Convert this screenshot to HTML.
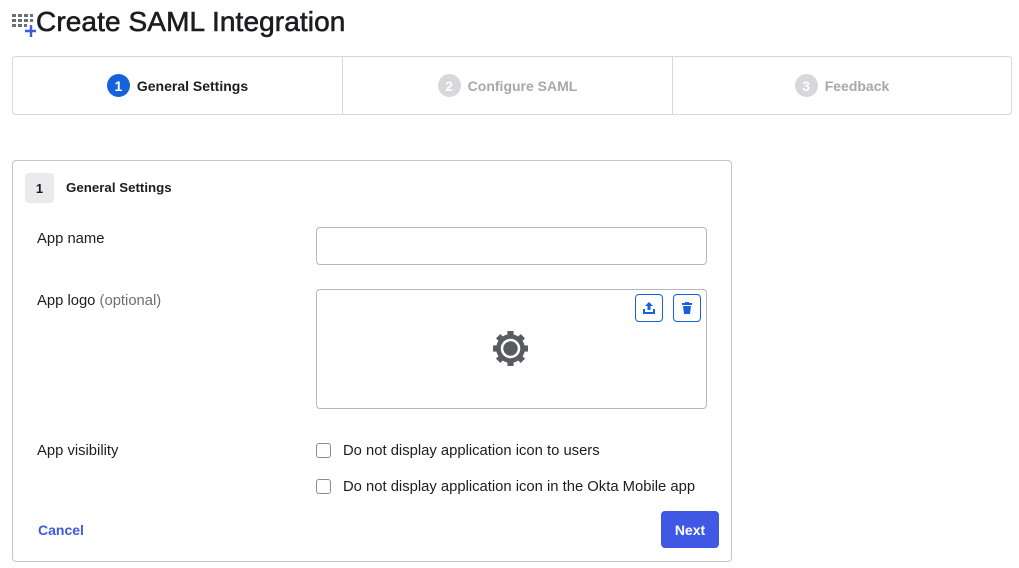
<!DOCTYPE html>
<html><head><meta charset="utf-8"><style>
body{margin:0;width:1019px;height:568px;background:#fff;font-family:"Liberation Sans",Arial,sans-serif;color:#1d1d21;position:relative;overflow:hidden}
.a{position:absolute}
h1{position:absolute;left:36px;top:6px;margin:0;font-size:28px;font-weight:normal;letter-spacing:0.1px;-webkit-text-stroke:0.6px #1d1d21;color:#1d1d21}
.steps{left:12px;top:56px;width:998px;height:57px;border:1px solid #d7d7dc;border-radius:4px;display:flex}
.st{display:flex;align-items:center;justify-content:center;font-size:14px;font-weight:bold;color:#a7a7ad;border-right:1px solid #d7d7dc}
.st:last-child{border-right:none}
.c{width:23px;height:23px;border-radius:50%;background:#d7d7dc;color:#fff;display:inline-flex;align-items:center;justify-content:center;font-size:14px;margin-right:7px}
.card{left:12px;top:160px;width:718px;height:400px;border:1px solid #c4c4c9;border-radius:4px}
.lbl{font-size:14.8px;color:#1d1d21}
.inp{border:1px solid #b7b7bd;border-radius:4px}
.cb{width:13px;height:13px;border:1.5px solid #8c8c94;border-radius:3px}
.ib{width:26px;height:26px;border:1px solid #1662dd;border-radius:4px;display:flex;align-items:center;justify-content:center}
</style></head><body>
<svg class="a" style="left:12px;top:14px" width="24" height="24" viewBox="0 0 24 24">
<g fill="#6e6e78"><rect x="0" y="0" width="4" height="3"/><rect x="6" y="0" width="4" height="3"/><rect x="12" y="0" width="4" height="3"/><rect x="18" y="0" width="3" height="3"/><rect x="0" y="5" width="4" height="3"/><rect x="6" y="5" width="4" height="3"/><rect x="12" y="5" width="4" height="3"/><rect x="18" y="5" width="3" height="3"/><rect x="0" y="10" width="4" height="3"/><rect x="6" y="10" width="4" height="3"/><rect x="12" y="10" width="3" height="3"/></g>
<path d="M19 11v12M13 17h12" stroke="#3f59e4" stroke-width="2.4"/></svg>
<h1>Create SAML Integration</h1>
<div class="a steps">
<div class="st" style="width:329px;color:#1d1d21"><span class="c" style="background:#1662dd">1</span>General Settings</div>
<div class="st" style="width:329px"><span class="c">2</span>Configure SAML</div>
<div class="st" style="width:338px"><span class="c">3</span>Feedback</div>
</div>
<div class="a card"></div>
<div class="a" style="left:25px;top:173px;width:29px;height:30px;background:#ebebed;border-radius:4px;font-size:13px;font-weight:bold;display:flex;align-items:center;justify-content:center">1</div>
<div class="a" style="left:66px;top:180px;font-size:13.3px;font-weight:bold">General Settings</div>
<div class="a lbl" style="left:37px;top:231px">App name</div>
<div class="a inp" style="left:316px;top:227px;width:389px;height:36px"></div>
<div class="a lbl" style="left:37px;top:293px">App logo <span style="color:#6e6e78">(optional)</span></div>
<div class="a inp" style="left:316px;top:289px;width:389px;height:118px"></div>
<div class="a ib" style="left:635px;top:294px"><svg width="14" height="14" viewBox="0 0 14 14"><path d="M7 1L3 5h2.5v4h3V5H11z M1 8v5h12V8h-2v3H3V8z" fill="#1662dd"/></svg></div>
<div class="a ib" style="left:673px;top:294px"><svg width="14" height="14" viewBox="0 0 14 14"><path d="M2 2h10v2H2z M5 1h4v1H5z M3 5h8l-1 8H4z" fill="#1662dd"/></svg></div>
<svg class="a" style="left:492px;top:330px" width="37" height="37" viewBox="0 0 36 36"><g fill="#5a5a61"><circle cx="18" cy="18" r="14"/><g id="t"><rect x="15" y="1" width="6" height="6"/><rect x="15" y="29" width="6" height="6"/></g><use href="#t" transform="rotate(45 18 18)"/><use href="#t" transform="rotate(90 18 18)"/><use href="#t" transform="rotate(135 18 18)"/></g><circle cx="18" cy="18" r="9.5" fill="#fff"/><circle cx="18" cy="18" r="7" fill="#5a5a61"/></svg>
<div class="a lbl" style="left:37px;top:443px">App visibility</div>
<div class="a cb" style="left:316px;top:443px"></div>
<div class="a lbl" style="left:343px;top:443px">Do not display application icon to users</div>
<div class="a cb" style="left:316px;top:479px"></div>
<div class="a lbl" style="left:343px;top:479px">Do not display application icon in the Okta Mobile app</div>
<div class="a" style="left:38px;top:522px;font-size:14px;font-weight:bold;color:#3f59e4">Cancel</div>
<div class="a" style="left:661px;top:511px;width:58px;height:37px;background:#3f59e4;border-radius:4px;color:#fff;font-size:14px;font-weight:bold;display:flex;align-items:center;justify-content:center">Next</div>
</body></html>
